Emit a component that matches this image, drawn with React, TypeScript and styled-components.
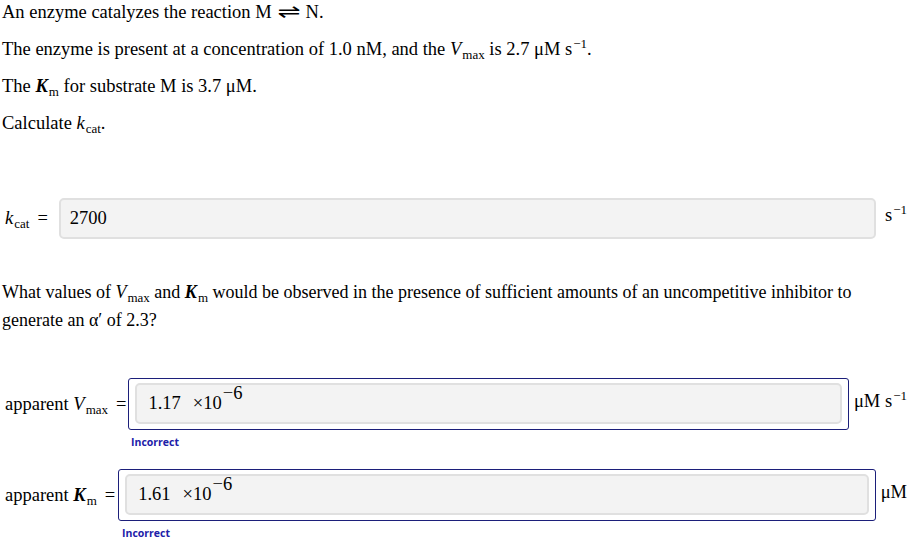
import React from "react";
import styled, { createGlobalStyle } from "styled-components";

const Global = createGlobalStyle`
  html, body { margin: 0; padding: 0; background: #fff; }
  body { font-family: "Liberation Serif", "Times New Roman", serif; color: #000; }
`;

const Page = styled.div`
  width: 913px;
  height: 548px;
  padding: 0 6px 0 2px;
  box-sizing: border-box;
  font-size: 18.5px;
  overflow: hidden;
`;

const Para = styled.p`
  margin: 0 0 13px;
  line-height: 24px;
`;

const Question = styled.p`
  margin: 39px 0 0;
  line-height: 28px;
  font-size: 18px;
`;

const Arrow = styled.span`
  display: inline-block;
  font-family: "DejaVu Sans", sans-serif;
  font-size: 19px;
  line-height: 1;
  transform: scaleX(1.45);
  margin: 0 9px 0 9px;
`;

const Sub = styled.sub`
  font-size: 13px;
  vertical-align: -4px;
  line-height: 0;
  margin-left: 1px;
  font-style: normal;
  font-weight: normal;
`;

const Sup = styled.sup`
  font-size: 13px;
  vertical-align: 7px;
  line-height: 0;
  margin-left: 1px;
`;

const BigSup = styled.sup`
  font-size: 18.5px;
  vertical-align: 10px;
  line-height: 0;
  margin-left: 1px;
`;

const Ital = styled.i`
  font-style: italic;
`;

const BoldItal = styled.b`
  font-style: italic;
  font-weight: bold;
`;

const Row = styled.div<{ $top: number }>`
  display: flex;
  align-items: center;
  margin-top: ${(p) => p.$top}px;
  padding-left: 3px;
`;

const Label = styled.span<{ $gap: number }>`
  flex: none;
  margin-right: ${(p) => p.$gap}px;
  white-space: nowrap;
`;

const Eq = styled.span`
  margin-left: 8px;
`;

const Field = styled.div`
  flex: 1;
  height: 41px;
  box-sizing: border-box;
  border: 2px solid #e0e0e0;
  border-radius: 5px;
  background: #f3f3f3;
  display: flex;
  align-items: center;
  padding-left: 9px;
  font-family: "Liberation Serif", "Times New Roman", serif;
  font-size: 18.5px;
`;

const Outlined = styled.div`
  flex: 1;
  height: 52px;
  box-sizing: border-box;
  border: 1px solid #1c1f7a;
  border-radius: 3px;
  padding: 4px 6px 5px;
  display: flex;
`;

const Inner = styled(Field)`
  height: auto;
  flex: 1;
  padding-left: 11px;
  align-items: flex-start;
  padding-top: 8px;
`;

const Unit = styled.span<{ $gap: number }>`
  flex: none;
  margin-left: ${(p) => p.$gap}px;
  white-space: nowrap;
  align-self: center;
  margin-top: -6px;
`;

const Times = styled.span`
  margin-left: 12px;
`;

const Feedback = styled.div<{ $left: number }>`
  font-family: "Open Sans", "Liberation Sans", sans-serif;
  font-weight: 700;
  font-size: 10.5px;
  color: #2020a8;
  margin: 4px 0 0 ${(p) => p.$left}px;
  line-height: 16px;
`;

export default function App() {
  return (
    <Page>
      <Global />
      <Para>
        An enzyme catalyzes the reaction M<Arrow>⇌</Arrow>N.
      </Para>
      <Para>
        The enzyme is present at a concentration of 1.0 nM, and the{" "}
        <Ital>V</Ital>
        <Sub>max</Sub> is 2.7 μM s<Sup>−1</Sup>.
      </Para>
      <Para>
        The <BoldItal>K</BoldItal>
        <Sub>m</Sub> for substrate M is 3.7 μM.
      </Para>
      <Para>
        Calculate <Ital>k</Ital>
        <Sub>cat</Sub>.
      </Para>

      <Row $top={63}>
        <Label $gap={11}>
          <Ital>k</Ital>
          <Sub>cat</Sub>
          <Eq>=</Eq>
        </Label>
        <Field>2700</Field>
        <Unit $gap={9}>
          s<Sup>−1</Sup>
        </Unit>
      </Row>

      <Question>
        What values of <Ital>V</Ital>
        <Sub>max</Sub> and <BoldItal>K</BoldItal>
        <Sub>m</Sub> would be observed in the presence of sufficient amounts of an
        uncompetitive inhibitor to
        <br />
        generate an α′ of 2.3?
      </Question>

      <Row $top={44}>
        <Label $gap={2}>
          apparent <Ital>V</Ital>
          <Sub>max</Sub>
          <Eq>=</Eq>
        </Label>
        <Outlined>
          <Inner>
            1.17<Times>×10</Times>
            <BigSup>−6</BigSup>
          </Inner>
        </Outlined>
        <Unit $gap={5}>
          μM s<Sup>−1</Sup>
        </Unit>
      </Row>
      <Feedback $left={129}>Incorrect</Feedback>

      <Row $top={19}>
        <Label $gap={3}>
          apparent <BoldItal>K</BoldItal>
          <Sub>m</Sub>
          <Eq>=</Eq>
        </Label>
        <Outlined>
          <Inner>
            1.61<Times>×10</Times>
            <BigSup>−6</BigSup>
          </Inner>
        </Outlined>
        <Unit $gap={5}>μM</Unit>
      </Row>
      <Feedback $left={120}>Incorrect</Feedback>
    </Page>
  );
}
